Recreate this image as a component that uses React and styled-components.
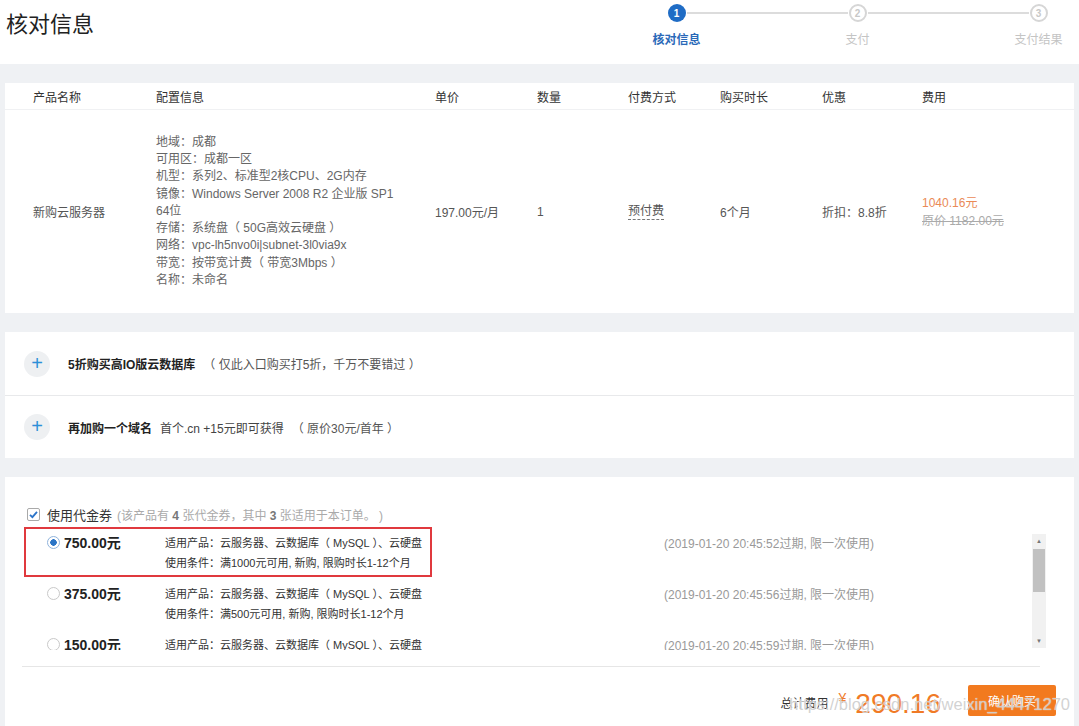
import styled, { createGlobalStyle } from "styled-components";

const GlobalStyle = createGlobalStyle`
  html, body {
    margin: 0;
    padding: 0;
    background: #eff1f4;
  }
  body {
    font-family: "Liberation Sans", "Noto Sans CJK SC", sans-serif;
    font-size: 12px;
    color: #333;
    overflow: hidden;
  }
`;

const steps = ["核对信息", "支付", "支付结果"];

const columns = ["产品名称", "配置信息", "单价", "数量", "付费方式", "购买时长", "优惠", "费用"];

const config = [
  "地域：成都",
  "可用区：成都一区",
  "机型：系列2、标准型2核CPU、2G内存",
  "镜像：Windows Server 2008 R2 企业版 SP1",
  "64位",
  "存储：系统盘（ 50G高效云硬盘 ）",
  "网络：vpc-lh5nvo0i|subnet-3l0via9x",
  "带宽：按带宽计费（ 带宽3Mbps ）",
  "名称：未命名",
];

const coupons = [
  { amount: "750.00元", min: "满1000元可用", date: "2019-01-20 20:45:52", checked: true },
  { amount: "375.00元", min: "满500元可用", date: "2019-01-20 20:45:56" },
  { amount: "150.00元", min: "满300元可用", date: "2019-01-20 20:45:59" },
];

const App = () => {
  return (
    <>
      <GlobalStyle />
      <Header>
        <Title>核对信息</Title>
        <Steps>
          {steps.map((s, i) => (
            <Step key={s} first={i === 0} last={i === steps.length - 1}>
              <Dot active={i === 0}>{i + 1}</Dot>
              <StepLabel active={i === 0}>{s}</StepLabel>
            </Step>
          ))}
        </Steps>
      </Header>

      <Page>
        <Card>
          <TableRow head>
            {columns.map((c) => (
              <span key={c}>{c}</span>
            ))}
          </TableRow>
          <TableRow>
            <span>新购云服务器</span>
            <Config>
              {config.map((l) => (
                <div key={l}>{l}</div>
              ))}
            </Config>
            <span>197.00元/月</span>
            <span>1</span>
            <Dashed>预付费</Dashed>
            <span>6个月</span>
            <span>折扣：8.8折</span>
            <Price>
              <div className="now">1040.16元</div>
              <div className="old">原价 1182.00元</div>
            </Price>
          </TableRow>
        </Card>

        <Card>
          <Addon>
            <PlusBtn>+</PlusBtn>
            <strong>5折购买高IO版云数据库</strong>
            <span className="note">（ 仅此入口购买打5折，千万不要错过 ）</span>
          </Addon>
          <Addon divided>
            <PlusBtn>+</PlusBtn>
            <strong>再加购一个域名</strong>
            <span className="sub">首个.cn +15元即可获得</span>
            <span className="note">（ 原价30元/首年 ）</span>
          </Addon>
        </Card>

        <Card grow>
          <VoucherHead>
            <CheckBox>
              <svg width="11" height="11" viewBox="0 0 11 11">
                <path d="M2 5.8 L4.4 8.2 L9 2.8" fill="none" stroke="#2b74c9" strokeWidth="1.8" />
              </svg>
            </CheckBox>
            <span className="label">使用代金券</span>
            <span className="hint">
              (该产品有 <b>4</b> 张代金券，其中 <b>3</b> 张适用于本订单。 )
            </span>
          </VoucherHead>

          <CouponList>
            <Highlight />
            <CouponItems>
              {coupons.map((c) => (
                <Coupon key={c.amount}>
                  <Radio checked={c.checked} />
                  <Amount>{c.amount}</Amount>
                  <Detail>
                    <div>适用产品：云服务器、云数据库（ MySQL ）、云硬盘</div>
                    <div>使用条件：{c.min}, 新购, 限购时长1-12个月</div>
                  </Detail>
                  <Expire>({c.date}过期, 限一次使用)</Expire>
                </Coupon>
              ))}
            </CouponItems>
            <FakeScroll>
              <span className="arrow">▲</span>
              <span className="track">
                <span className="thumb" />
              </span>
              <span className="arrow">▼</span>
            </FakeScroll>
          </CouponList>

          <Divider />

          <Footer>
            <span className="label">总计费用</span>
            <Total>
              <span className="yen">¥</span>
              290.16
            </Total>
            <BuyBtn>确认购买</BuyBtn>
            <Watermark>https://blog.csdn.net/weixin_44471270</Watermark>
          </Footer>
        </Card>
      </Page>
    </>
  );
};

export default App;

const Header = styled.header`
  height: 64px;
  background: #fff;
  display: grid;
  grid-template-columns: 580px 543px;
  padding-left: 6px;
  overflow: hidden;
`;

const Title = styled.h1`
  margin: 0;
  padding-top: 10px;
  font-size: 22px;
  line-height: 30px;
  font-weight: normal;
  color: #222;
`;

const Steps = styled.div`
  display: grid;
  grid-template-columns: repeat(3, 181px);
`;

const Step = styled.div`
  position: relative;
  display: flex;
  flex-direction: column;
  align-items: center;

  &::before,
  &::after {
    content: "";
    position: absolute;
    top: 12px;
    height: 2px;
    background: #dcdcdc;
  }
  &::before {
    left: 0;
    right: calc(50% + 10px);
    display: ${(p) => (p.first ? "none" : "block")};
  }
  &::after {
    left: calc(50% + 10px);
    right: 0;
    display: ${(p) => (p.last ? "none" : "block")};
  }
`;

const Dot = styled.span`
  margin-top: 4px;
  width: 18px;
  height: 18px;
  box-sizing: border-box;
  border-radius: 50%;
  display: flex;
  align-items: center;
  justify-content: center;
  font-size: 10px;
  font-weight: bold;
  background: ${(p) => (p.active ? "#1f6cc5" : "#fff")};
  border: ${(p) => (p.active ? "none" : "2px solid #d6d6d6")};
  color: ${(p) => (p.active ? "#fff" : "#c8c8c8")};
`;

const StepLabel = styled.span`
  margin-top: 10px;
  font-size: 12px;
  line-height: 16px;
  font-weight: ${(p) => (p.active ? "bold" : "normal")};
  color: ${(p) => (p.active ? "#2a69b8" : "#c4c4c4")};
`;

const Page = styled.main`
  padding: 19px 5px 0;
  display: flex;
  flex-direction: column;
  gap: 19px;
`;

const Card = styled.section`
  background: #fff;
  min-height: ${(p) => (p.grow ? "260px" : "auto")};
`;

const TableRow = styled.div`
  display: grid;
  grid-template-columns: 123px 279px 102px 91px 92px 102px 100px 1fr;
  padding-left: 28px;
  align-items: center;
  height: ${(p) => (p.head ? "26px" : "203px")};
  border-bottom: ${(p) => (p.head ? "1px solid #f0f1f3" : "none")};
  color: ${(p) => (p.head ? "#333" : "#555")};
  font-size: 12px;
`;

const Config = styled.div`
  line-height: 17.25px;
  color: #666;
`;

const Dashed = styled.span`
  justify-self: start;
  border-bottom: 1px dashed #777;
  line-height: 15px;
`;

const Price = styled.div`
  line-height: 18px;

  .now {
    color: #ea8a56;
  }
  .old {
    color: #aaa;
    text-decoration: line-through;
  }
`;

const Addon = styled.div`
  height: 63px;
  box-sizing: border-box;
  display: flex;
  align-items: center;
  padding-left: 19px;
  border-top: ${(p) => (p.divided ? "1px solid #e8e9eb" : "none")};
  font-size: 12px;

  strong {
    color: #222;
    margin-right: 8px;
  }
  .sub {
    color: #444;
    margin-right: 8px;
  }
  .note {
    color: #555;
  }
`;

const PlusBtn = styled.span`
  width: 26px;
  height: 26px;
  border-radius: 50%;
  background: #eef0f2;
  color: #2d8fd8;
  font-size: 20px;
  line-height: 24px;
  text-align: center;
  margin-right: 18px;
`;

const VoucherHead = styled.div`
  display: flex;
  align-items: center;
  padding: 28px 0 0 22px;
  height: 18px;
  font-size: 13px;

  .label {
    color: #333;
    margin: 0 5px 0 7px;
  }
  .hint {
    color: #aaa;
    font-size: 12px;
  }
  .hint b {
    color: #777;
  }
`;

const CheckBox = styled.span`
  width: 13px;
  height: 13px;
  box-sizing: border-box;
  border: 1px solid #a9a9a9;
  border-radius: 2px;
  display: flex;
  align-items: center;
  justify-content: center;
`;

const CouponList = styled.div`
  position: relative;
  margin: 7px 28px 0 17px;
  height: 120px;
  display: flex;
`;

const CouponItems = styled.div`
  flex: 1;
  overflow: hidden;
`;

const Highlight = styled.div`
  position: absolute;
  left: 2px;
  top: -3px;
  width: 408px;
  height: 50px;
  border: 2px solid #e0393e;
  box-sizing: border-box;
  pointer-events: none;
`;

const Coupon = styled.div`
  height: 51px;
  box-sizing: border-box;
  padding: 3px 0 0 25px;
  display: grid;
  grid-template-columns: 17px 101px 499px 1fr;
  align-items: start;
`;

const Radio = styled.span`
  margin-top: 3px;
  width: 13px;
  height: 13px;
  box-sizing: border-box;
  border-radius: 50%;
  border: 1px solid ${(p) => (p.checked ? "#8fb3dc" : "#c9c9c9")};
  background: ${(p) =>
    p.checked ? "radial-gradient(circle, #2a74c6 0 3px, #fff 3.5px)" : "#fff"};
`;

const Amount = styled.span`
  font-size: 14px;
  font-weight: bold;
  line-height: 20px;
  color: #222;
`;

const Detail = styled.div`
  font-size: 11px;
  line-height: 20px;
  color: #333;
`;

const Expire = styled.span`
  font-size: 12px;
  line-height: 22px;
  color: #999;
`;

const FakeScroll = styled.div`
  width: 14px;
  margin: 4px 0 2px;
  background: #f1f1f1;
  display: flex;
  flex-direction: column;
  align-items: center;

  .arrow {
    font-size: 6px;
    color: #777;
    height: 14px;
    line-height: 14px;
  }
  .track {
    flex: 1;
    width: 100%;
  }
  .thumb {
    display: block;
    margin: 1px 1px 0;
    height: 43px;
    background: #c1c1c1;
  }
`;

const Divider = styled.hr`
  margin: 16px 34px 0 17px;
  border: none;
  border-top: 1px solid #e6e6e6;
`;

const Footer = styled.div`
  position: relative;
  display: flex;
  align-items: center;
  justify-content: flex-end;
  padding: 18px 18px 0 0;
  height: 31px;

  .label {
    font-size: 12px;
    color: #333;
    margin-right: 10px;
    padding-top: 4px;
  }
`;

const Total = styled.span`
  font-size: 28px;
  color: #f07a26;
  line-height: 31px;
  margin-right: 27px;

  .yen {
    font-size: 14px;
    vertical-align: 10px;
    margin-right: 9px;
  }
`;

const BuyBtn = styled.button`
  width: 88px;
  height: 31px;
  border: none;
  border-radius: 2px;
  background: #f27a1f;
  color: #fff;
  font-family: inherit;
  font-size: 12px;
`;

const Watermark = styled.span`
  position: absolute;
  right: 4px;
  top: 28px;
  font-size: 16.5px;
  color: rgba(190, 190, 190, 0.7);
  text-shadow: 0 0 1px #fff;
  pointer-events: none;
`;
